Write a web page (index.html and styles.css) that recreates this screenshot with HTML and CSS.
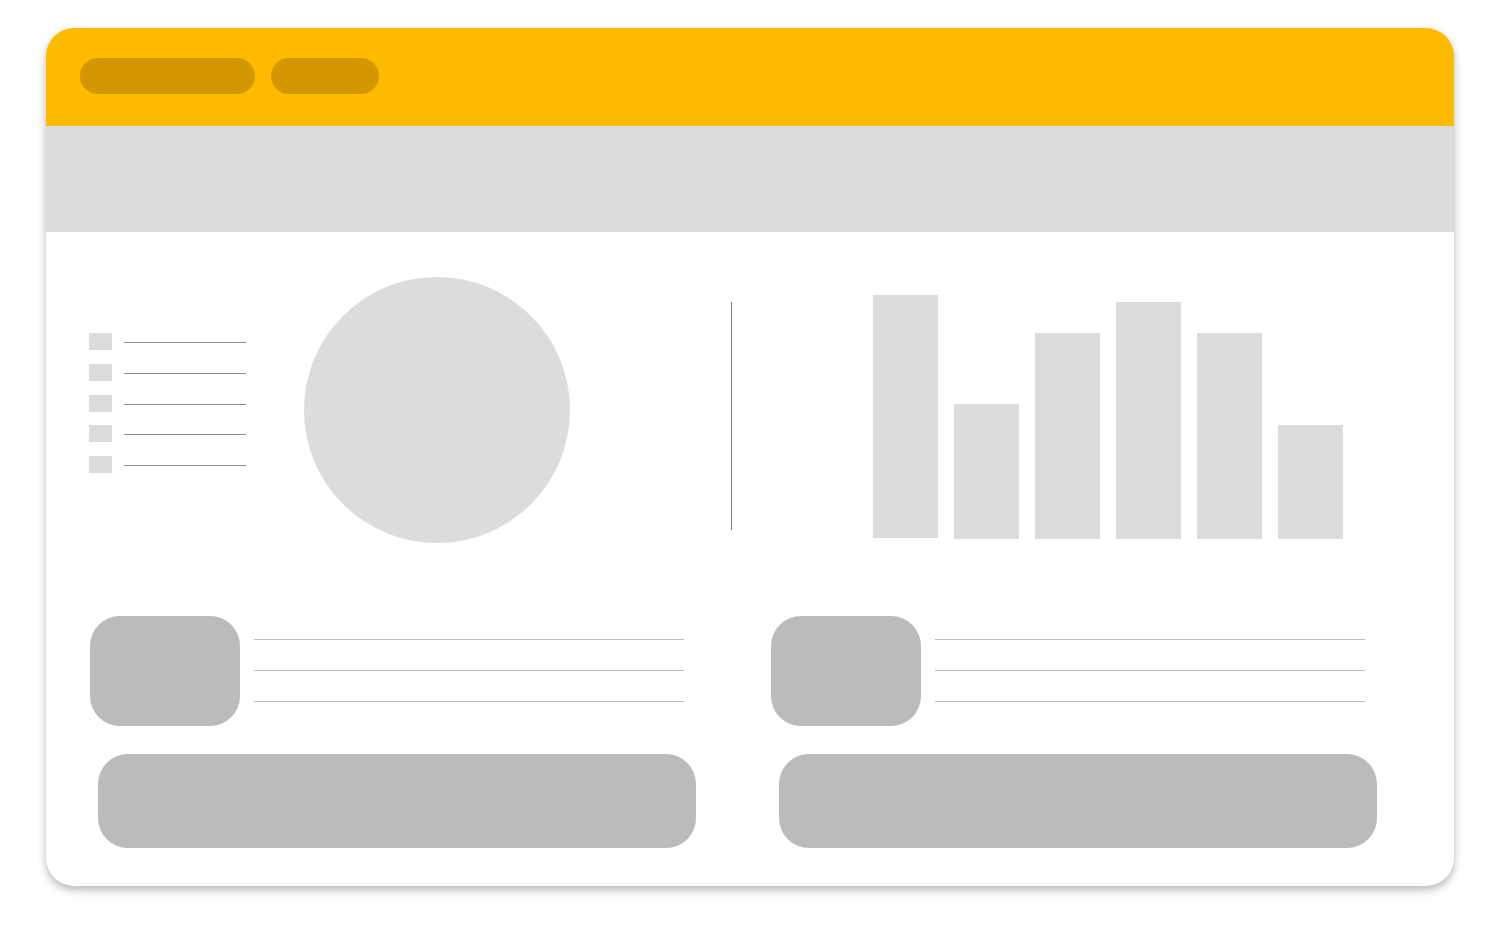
FILE: index.html
```html
<!DOCTYPE html>
<html lang="en">
<head>
  <meta charset="UTF-8">
  <meta name="viewport" content="width=device-width, initial-scale=1.0">
  <title>Dashboard Wireframe</title>
  <link rel="stylesheet" href="styles.css">
</head>
<body>
  <div class="card">
    <div class="topbar">
      <div class="pill pill-long"></div>
      <div class="pill pill-short"></div>
    </div>
    <div class="banner"></div>

    <div class="charts">
      <div class="legend">
        <div class="legend-item"><span class="swatch"></span><span class="legend-line"></span></div>
        <div class="legend-item"><span class="swatch"></span><span class="legend-line"></span></div>
        <div class="legend-item"><span class="swatch"></span><span class="legend-line"></span></div>
        <div class="legend-item"><span class="swatch"></span><span class="legend-line"></span></div>
        <div class="legend-item"><span class="swatch"></span><span class="legend-line"></span></div>
      </div>
      <div class="pie"></div>
      <div class="divider"></div>
      <div class="bars">
        <div class="bar bar-first" style="height: 243px"></div>
        <div class="bar" style="height: 135px"></div>
        <div class="bar" style="height: 206px"></div>
        <div class="bar" style="height: 237px"></div>
        <div class="bar" style="height: 206px"></div>
        <div class="bar" style="height: 114px"></div>
      </div>
    </div>

    <div class="tiles">
      <div class="tile">
        <div class="profile">
          <div class="avatar"></div>
          <div class="text-lines">
            <span class="text-line"></span>
            <span class="text-line"></span>
            <span class="text-line"></span>
          </div>
        </div>
        <div class="button"></div>
      </div>
      <div class="tile">
        <div class="profile">
          <div class="avatar"></div>
          <div class="text-lines">
            <span class="text-line"></span>
            <span class="text-line"></span>
            <span class="text-line"></span>
          </div>
        </div>
        <div class="button"></div>
      </div>
    </div>
  </div>
</body>
</html>
```

FILE: styles.css
```css
* {
  margin: 0;
  padding: 0;
  box-sizing: border-box;
}

body {
  background: #ffffff;
  padding: 28px 46px;
  font-family: "Liberation Sans", Arial, sans-serif;
}

.card {
  width: 1408px;
  background: #ffffff;
  border-radius: 28px;
  overflow: hidden;
  box-shadow: 0 4px 8px rgba(0, 0, 0, 0.28);
  padding-bottom: 38px;
}

.topbar {
  height: 98px;
  background: #ffbb00;
  display: flex;
  gap: 16px;
  padding: 30px 34px 0;
}

.pill {
  height: 36px;
  border-radius: 18px;
  background: #d39700;
}

.pill-long {
  width: 175px;
}

.pill-short {
  width: 108px;
}

.banner {
  height: 106px;
  background: #dcdcdc;
}

/* charts row */
.charts {
  display: flex;
  align-items: flex-start;
  padding: 45px 0 0 43px;
  height: 311px;
}

.legend {
  margin-top: 56px;
  display: flex;
  flex-direction: column;
  gap: 13.75px;
}

.legend-item {
  display: flex;
  align-items: flex-start;
  gap: 12px;
  height: 17px;
}

.swatch {
  width: 23px;
  height: 17px;
  background: #dcdcdc;
}

.legend-line {
  width: 122px;
  height: 1px;
  margin-top: 9px;
  background: #8c8c8c;
}

.pie {
  width: 266px;
  height: 266px;
  margin-left: 58px;
  border-radius: 50%;
  background: #dcdcdc;
}

.divider {
  width: 1px;
  height: 228px;
  margin: 25px 0 0 161px;
  background: #7a7a7a;
}

.bars {
  display: flex;
  align-items: flex-end;
  gap: 16px;
  height: 244px;
  margin: 18px 0 0 141px;
}

.bar {
  width: 65px;
  background: #dcdcdc;
}

.bar-first {
  margin-bottom: 1px;
}

/* bottom tiles */
.tiles {
  display: grid;
  grid-template-columns: 681px 681px;
  margin-top: 73px;
  padding-left: 44px;
}

.profile {
  display: flex;
  gap: 14px;
}

.avatar {
  width: 150px;
  height: 110px;
  border-radius: 30px;
  background: #bbbbbb;
}

.text-lines {
  display: flex;
  flex-direction: column;
  gap: 30px;
  padding-top: 23px;
}

.text-line {
  display: block;
  width: 430px;
  height: 1px;
  background: #bdbdbd;
}

.button {
  width: 598px;
  height: 94px;
  margin: 28px 0 0 8px;
  border-radius: 30px;
  background: #bbbbbb;
}
```
